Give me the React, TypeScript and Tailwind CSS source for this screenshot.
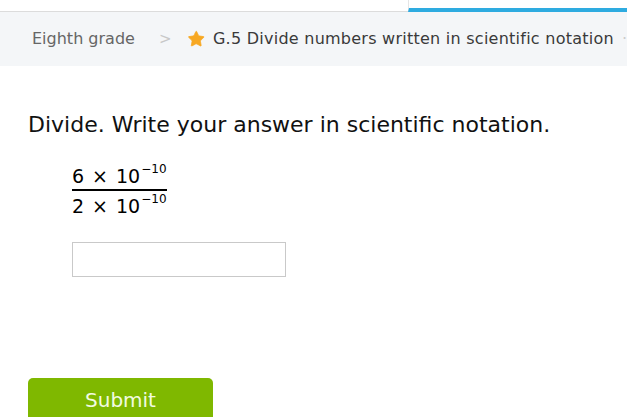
import { Star } from "lucide-react";

const Power = ({ base, coef, exp }: { base: string; coef: string; exp: string }) => (
  <div className="flex items-start h-[24px] text-[19px] leading-[24px] whitespace-nowrap">
    <span>{coef}</span>
    <span className="mx-[8px]">×</span>
    <span>{base}</span>
    <span className="text-[12px] leading-[12px] -mt-[1px] ml-[1px]">−{exp.replace("-", "")}</span>
  </div>
);

const App = () => {
  return (
    <div className="w-[627px] h-[417px] overflow-hidden bg-white text-black font-['DejaVu_Sans',Verdana,sans-serif]">
      {/* tabs, mostly scrolled off */}
      <div className="flex h-[12px] overflow-hidden">
        <div className="w-[408px] border-b border-[#dcdcdc] flex justify-center">
          <span className="text-[15px] leading-[18px] -mt-[14px] text-[#555]">Recommendations</span>
        </div>
        <div className="flex-1 border-l border-[#e5e5e5] border-b-[4px] border-b-[#2eabe0] flex justify-center pl-[58px]">
          <span className="text-[15px] leading-[18px] -mt-[14px] text-[#2eabe0]">Next</span>
        </div>
      </div>

      {/* breadcrumb */}
      <div className="h-[54px] bg-[#f4f6f8] flex items-center pl-[32px] whitespace-nowrap overflow-hidden text-[16px]">
        <span className="text-[#666]">Eighth grade</span>
        <span className="ml-[24px] text-[#c8c8c8] text-[15px]">&gt;</span>
        <Star className="ml-[16px] w-[20px] h-[20px] text-[#f7a823] fill-[#f7a823]" strokeWidth={1} />
        <span className="ml-[7px] text-[#3a3a3a] tracking-[0.25px]">G.5 Divide numbers written in scientific notation</span>
        <span className="ml-[8px] text-[#ccc]">·</span>
      </div>

      {/* question */}
      <div className="pl-[28px] pt-[45px]">
        <p className="text-[22px] leading-[28px] text-[#111]">Divide. Write your answer in scientific notation.</p>

        <div className="ml-[44px] mt-[25px] inline-flex flex-col">
          <Power coef="6" base="10" exp="-10" />
          <div className="h-[2px] bg-black mt-[1px] mb-[3px]" />
          <Power coef="2" base="10" exp="-10" />
        </div>

        <div className="ml-[44px] mt-[24px]">
          <input
            type="text"
            className="w-[214px] h-[35px] border border-[#c9c9c9] outline-none px-2 text-[18px]"
          />
        </div>

        <button className="mt-[101px] w-[185px] h-[44px] rounded-[5px] bg-[#7fb800] text-[#f2fbe0] text-[20px] leading-[44px]">
          Submit
        </button>
      </div>
    </div>
  );
};

export default App;
